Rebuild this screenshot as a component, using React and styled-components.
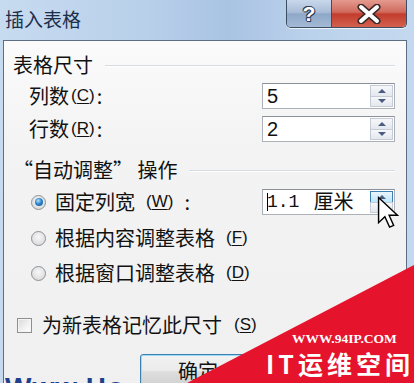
import React from 'react';
import styled, { createGlobalStyle } from 'styled-components';

const CJK = `"Noto Sans CJK SC", "Microsoft YaHei", sans-serif`;

const GlobalStyle = createGlobalStyle`
  html, body { margin: 0; padding: 0; background: #fff; }
  body { overflow: hidden; }
  * { box-sizing: border-box; }
`;

const Screen = styled.div`
  position: relative;
  width: 414px;
  height: 383px;
  overflow: hidden;
  background: #fff;
  font-family: ${CJK};
  color: #111;
`;

const Frame = styled.div`
  display: flex;
  flex-direction: column;
  height: 100%;
  background: linear-gradient(90deg, #c7dbf0 0%, #b9d0ea 35%, #a9c3e3 55%, #bbd2ec 75%, #c4d9ef 100%);
`;

const TitleBar = styled.div`
  height: 40px;
  flex: none;
  display: flex;
  align-items: flex-start;
  padding: 0 7px 0 5px;
`;

const Title = styled.div`
  font-size: 19px;
  line-height: 22px;
  margin-top: 8px;
  color: #1c2f4a;
`;

const Caption = styled.div`
  margin-left: auto;
  display: flex;
  height: 28px;
  border: 1px solid #3d4d63;
  border-top: none;
  border-radius: 0 0 5px 5px;
  overflow: hidden;
  box-shadow: 0 1px 0 rgba(255, 255, 255, 0.7);
`;

const CapBtn = styled.div`
  width: ${p => p.$w}px;
  display: flex;
  align-items: center;
  justify-content: center;
  background: ${p => p.$bg};
  & + & { border-left: 1px solid #3d4d63; }
`;

const HelpGlyph = styled.span`
  font-family: "Liberation Sans", sans-serif;
  font-weight: 700;
  font-size: 21px;
  line-height: 24px;
  color: #fff;
  text-shadow: -1px 0 #2b3c57, 1px 0 #2b3c57, 0 -1px #2b3c57, 0 1px #2b3c57, 1px 1px #2b3c57, -1px -1px #2b3c57;
`;

const Body = styled.div`
  flex: 1;
  margin: 0 7px 0 3px;
  border: 1px solid #5c6d84;
  border-bottom: none;
  background: linear-gradient(#fbfbfb 0%, #f3f3f3 30%, #f0f0f0 100%);
  padding: 12px 11px 0 0;
  display: flex;
  flex-direction: column;
`;

const GroupHeading = styled.div`
  display: flex;
  align-items: center;
  gap: 12px;
  height: 24px;
  padding-left: 9px;
  margin-top: ${p => p.$mt || 0}px;
  font-size: 20px;
  line-height: 24px;
  white-space: nowrap;
`;

const Rule = styled.div`
  flex: 1;
  height: 1px;
  background: #d3dbe3;
  box-shadow: 0 1px 0 #fff;
`;

const FieldRow = styled.div`
  display: flex;
  align-items: center;
  justify-content: space-between;
  height: 26px;
  padding-left: ${p => p.$pl}px;
  margin-top: ${p => p.$mt}px;
`;

const Label = styled.span`
  display: flex;
  align-items: center;
  gap: ${p => p.$gap || 0}px;
  font-size: 20px;
  line-height: 24px;
  white-space: nowrap;
`;

const Mnemonic = styled.span`
  font-family: "Liberation Sans", sans-serif;
  font-size: 17px;
  margin-left: 2px;
  margin-right: 2px;
  u { text-underline-offset: 2px; }
`;

const SpinBox = styled.div`
  width: 133px;
  height: 26px;
  border: 1px solid #acb0b8;
  border-top-color: #8c9099;
  background: #fff;
  display: flex;
  align-items: stretch;
`;

const SpinValue = styled.div`
  flex: 1;
  display: flex;
  align-items: center;
  padding-left: 4px;
  font-family: "Liberation Sans", ${CJK};
  font-size: 20px;
  line-height: 24px;
`;

const MonoNum = styled.span`
  font-family: "Liberation Mono", monospace;
  font-size: 18px;
  margin-right: 14px;
`;

const Caret = styled.span`
  display: inline-block;
  width: 1px;
  height: 18px;
  background: #000;
  margin-right: -1px;
`;

const SpinButtons = styled.div`
  width: 25px;
  display: flex;
  flex-direction: column;
  padding: 1px;
`;

const SpinBtn = styled.div`
  flex: 1;
  display: flex;
  align-items: center;
  justify-content: center;
  border: 1px solid ${p => (p.$hot ? '#3c7fb1' : '#c5ccd5')};
  background: ${p => (p.$hot
    ? 'linear-gradient(#eaf6fd, #bee6fd)'
    : 'linear-gradient(#f6f7f9, #e3e8ee)')};
  & + & { margin-top: -1px; }
`;

const Arrow = styled.span`
  width: 0;
  height: 0;
  border-left: 4px solid transparent;
  border-right: 4px solid transparent;
  ${p => (p.$down
    ? 'border-top: 4px solid #4a5d80;'
    : 'border-bottom: 4px solid #4a5d80;')}
`;

const Radio = styled.span`
  width: 15px;
  height: 15px;
  border-radius: 50%;
  flex: none;
  border: 1px solid #8e9296;
  background: radial-gradient(circle at 50% 40%, #f7f7f7 0%, #e2e2e2 60%, #d0d0d0 100%);
  display: flex;
  align-items: center;
  justify-content: center;
  &::after {
    content: '';
    width: 8px;
    height: 8px;
    border-radius: 50%;
    display: ${p => (p.$on ? 'block' : 'none')};
    background: radial-gradient(circle at 40% 35%, #b9e3fb 0%, #2c86cf 45%, #0d4f8f 100%);
  }
`;

const Check = styled.span`
  width: 15px;
  height: 15px;
  flex: none;
  border: 1px solid #8f8f8f;
  background: linear-gradient(135deg, #d8d8d8 0%, #f3f3f3 60%, #ffffff 100%);
  box-shadow: inset 0 0 0 1px #f4f4f4;
`;

const ButtonRow = styled.div`
  padding-left: 136px;
  margin-top: 16px;
`;

const OkButton = styled.div`
  width: 110px;
  height: 36px;
  border: 1px solid #3c7fb1;
  border-radius: 3px;
  box-shadow: inset 0 0 0 1px #9fd9f6;
  background: linear-gradient(#f2f2f2 0%, #ebebeb 45%, #dddddd 50%, #cfcfcf 100%);
  padding: 4px 0 0 37px;
  font-size: 20px;
  line-height: 24px;
`;

const BackText = styled.div`
  position: absolute;
  left: 5px;
  top: 374px;
  font-family: "Liberation Sans", sans-serif;
  font-weight: 700;
  font-size: 28px;
  line-height: 28px;
  color: #203f8c;
  letter-spacing: 1px;
  white-space: nowrap;
`;

const Ribbon = styled.div`
  position: absolute;
  left: 187px;
  top: 265px;
  width: 227px;
  height: 118px;
  background: #e6132d;
  clip-path: polygon(0 100%, 100% 0, 100% 100%);
`;

const Mark = styled.div`
  position: absolute;
  left: 266px;
  top: 331px;
  display: flex;
  flex-direction: column;
  gap: 2px;
  color: #fff;
  white-space: nowrap;
`;

const MarkUrl = styled.span`
  font-family: "Liberation Serif", serif;
  font-weight: 700;
  font-size: 13.5px;
  line-height: 15px;
  margin-left: 26px;
`;

const MarkName = styled.span`
  font-family: ${CJK};
  font-weight: 700;
  font-size: 25px;
  line-height: 30px;
  letter-spacing: 4px;
`;

const Cursor = styled.svg`
  position: absolute;
  left: 377px;
  top: 196px;
`;

function Spin({ children, hot }) {
  return (
    <SpinBox>
      <SpinValue>{children}</SpinValue>
      <SpinButtons>
        <SpinBtn $hot={hot}><Arrow /></SpinBtn>
        <SpinBtn><Arrow $down /></SpinBtn>
      </SpinButtons>
    </SpinBox>
  );
}

const Mn = ({ k }) => (
  <Mnemonic>(<u>{k}</u>)</Mnemonic>
);

export default function App() {
  return (
    <>
      <GlobalStyle />
      <Screen>
        <Frame>
          <TitleBar>
            <Title>插入表格</Title>
            <Caption>
              <CapBtn $w={44} $bg="linear-gradient(#c9d8eb 0%, #a9bdd8 45%, #8fa8c8 52%, #a3b9d5 100%)">
                <HelpGlyph>?</HelpGlyph>
              </CapBtn>
              <CapBtn $w={75} $bg="linear-gradient(#e49a8f 0%, #d06a5c 45%, #c23c2d 52%, #d3614f 100%)">
                <svg width="26" height="20" viewBox="0 0 26 20">
                  <path d="M5 3 L21 17 M21 3 L5 17" stroke="#3a2a2a" strokeWidth="7" strokeLinecap="round" />
                  <path d="M5 3 L21 17 M21 3 L5 17" stroke="#fff" strokeWidth="4" strokeLinecap="round" />
                </svg>
              </CapBtn>
            </Caption>
          </TitleBar>
          <Body>
            <GroupHeading>
              表格尺寸<Rule />
            </GroupHeading>
            <FieldRow $pl={25} $mt={6}>
              <Label>列数<Mn k="C" />:</Label>
              <Spin>5</Spin>
            </FieldRow>
            <FieldRow $pl={25} $mt={7}>
              <Label>行数<Mn k="R" />:</Label>
              <Spin>2</Spin>
            </FieldRow>
            <GroupHeading $mt={16}>
              “自动调整” 操作<Rule />
            </GroupHeading>
            <FieldRow $pl={27} $mt={7}>
              <Label $gap={9}><Radio $on />固定列宽<Mn k="W" />:</Label>
              <Spin hot>
                <Caret /><MonoNum>1.1</MonoNum>厘米
              </Spin>
            </FieldRow>
            <FieldRow $pl={27} $mt={10}>
              <Label $gap={9}><Radio />根据内容调整表格<Mn k="F" /></Label>
            </FieldRow>
            <FieldRow $pl={27} $mt={9}>
              <Label $gap={9}><Radio />根据窗口调整表格<Mn k="D" /></Label>
            </FieldRow>
            <FieldRow $pl={13} $mt={26}>
              <Label $gap={10}><Check />为新表格记忆此尺寸<Mn k="S" /></Label>
            </FieldRow>
            <ButtonRow>
              <OkButton>确定</OkButton>
            </ButtonRow>
          </Body>
        </Frame>
        <BackText>Www.Ho</BackText>
        <Cursor width="22" height="33" viewBox="0 0 14 21">
          <path d="M1 1 L1 17 L5 13.2 L8 19.8 L10.6 18.7 L7.7 12.2 L13 12.2 Z" fill="#fff" stroke="#000" strokeWidth="0.9" strokeLinejoin="miter" />
        </Cursor>
        <Ribbon />
        <Mark>
          <MarkUrl>WWW.94IP.COM</MarkUrl>
          <MarkName>IT运维空间</MarkName>
        </Mark>
      </Screen>
    </>
  );
}
